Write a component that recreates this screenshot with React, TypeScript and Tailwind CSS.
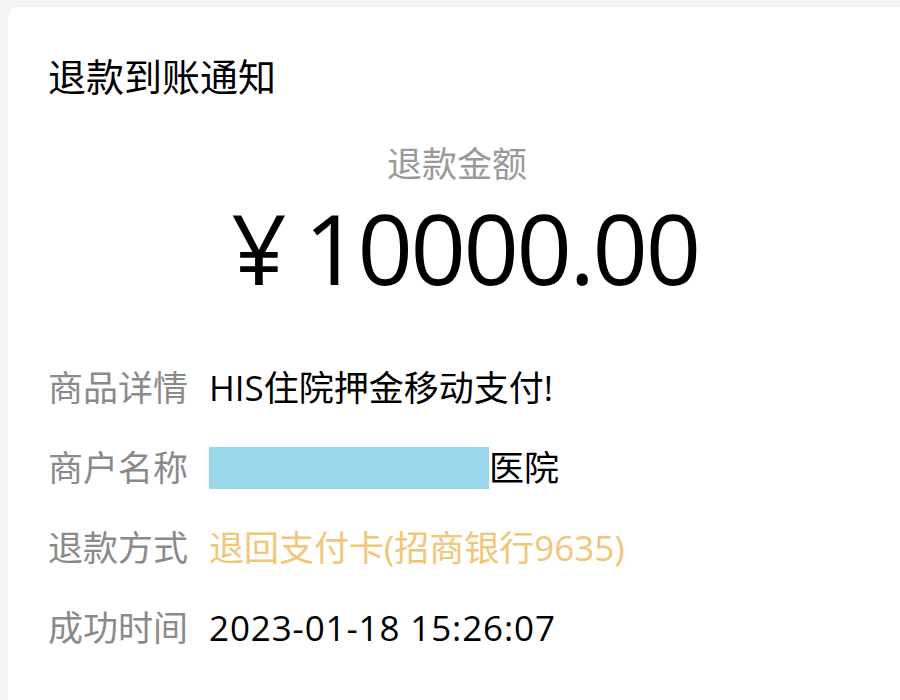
import React from 'react';

const font = { fontFamily: '"Open Sans", "Noto Sans CJK SC", sans-serif' };

interface Row {
  label: string;
  value: React.ReactNode;
}

const rows: Row[] = [
  { label: '商品详情', value: <span className="text-black">HIS住院押金移动支付!</span> },
  {
    label: '商户名称',
    value: (
      <span className="flex items-center text-black">
        <span className="inline-block h-[42px] w-[280px] bg-[#9ad7ea]" />
        医院
      </span>
    ),
  },
  { label: '退款方式', value: <span className="text-[#f2c577]">退回支付卡(招商银行9635)</span> },
  { label: '成功时间', value: <span className="tracking-[0.025em] text-black">2023-01-18 15:26:07</span> },
];

export default function App() {
  return (
    <div className="min-h-[700px] bg-[#f4f4f4] pl-[8px] pt-[7px]" style={font}>
      <div className="min-h-[693px] rounded-tl-[10px] bg-white pl-[40px] pt-[44px]">
        <h1 className="text-[38px] leading-[50px] text-black">退款到账通知</h1>

        <div className="mt-[46px] flex flex-col items-center pr-[18px]">
          <p className="pr-[16px] text-[35px] leading-[34px] text-[#999999]">退款金额</p>
          <p className="mt-[16px] flex items-baseline text-[97px] leading-[100px] tracking-[-0.025em] text-black">
            <span className="mr-[20px]">¥</span>
            <span>10000.00</span>
          </p>
        </div>

        <div className="mt-[51px] flex flex-col">
          {rows.map((row) => (
            <div key={row.label} className="flex h-[80px] items-center text-[35px]">
              <span className="w-[161px] shrink-0 text-[#8a8a8a]">{row.label}</span>
              {row.value}
            </div>
          ))}
        </div>
      </div>
    </div>
  );
}
